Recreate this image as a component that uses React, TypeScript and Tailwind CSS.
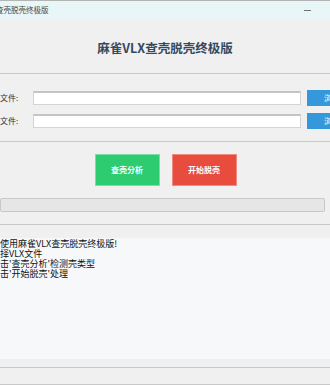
import React from 'react';

const cjk = { fontFamily: '"Noto Sans CJK SC", "Liberation Sans", sans-serif' };

const logLines = [
  "使用麻雀VLX查壳脱壳终极版!",
  "择VLX文件",
  "击'查壳分析'检测壳类型",
  "击'开始脱壳'处理",
];

const FileRow: React.FC<{ label: string }> = ({ label }) => (
  <div className="flex h-[16px] items-center">
    <span className="w-[33px] shrink-0 text-[8px] leading-none text-[#333]">{label}</span>
    <div className="h-[14px] w-[268px] shrink-0 border border-[#d4d4d4] border-t-[#c4c4c4] border-t-2 bg-white" />
    <button className="ml-[6px] flex h-[16px] w-[40px] shrink-0 items-center justify-start pl-[17px] text-[8px] text-white bg-[#3498db]">
      浏览
    </button>
  </div>
);

export default function App() {
  return (
    <div className="flex h-[385px] w-[330px] flex-col overflow-hidden bg-[#f0f0f0]" style={cjk}>
      {/* title bar */}
      <div className="flex h-[19px] shrink-0 items-center justify-between overflow-hidden border-t border-[#b4b4b4] bg-[#e8f6f8]">
        <span className="ml-[-4px] whitespace-nowrap text-[7.5px] leading-none text-[#444]">查壳脱壳终极版</span>
        <span className="mr-[19px] h-[1px] w-[7px] bg-[#707070]" />
      </div>

      {/* heading */}
      <div className="flex h-[55px] shrink-0 items-center justify-center border-b border-[#c8c8c8] pt-[4px]">
        <h1 className="text-[12.5px] font-bold text-[#34495e]">麻雀VLX查壳脱壳终极版</h1>
      </div>

      {/* file rows */}
      <div className="flex h-[68px] shrink-0 flex-col gap-[7px] overflow-hidden border-b border-[#c8c8c8] pt-[16px]">
        <FileRow label="文件:" />
        <FileRow label="文件:" />
      </div>

      {/* actions */}
      <div className="flex h-[83px] shrink-0 flex-col border-b border-[#c8c8c8] pt-[12px]">
        <div className="flex justify-center gap-[12px] pl-[1px]">
          <button className="h-[32px] w-[65px] border border-[#7fdca4] bg-[#2ecc71] text-[8px] font-bold text-white">
            查壳分析
          </button>
          <button className="h-[32px] w-[65px] border border-[#f08a80] bg-[#e74c3c] text-[8px] font-bold text-white">
            开始脱壳
          </button>
        </div>
        <div className="mt-[12px] h-[14px] w-[325px] rounded-[2px] border border-[#c8c8c8] bg-[#e6e6e6]" />
      </div>

      {/* log */}
      <div className="mt-[13px] h-[121px] shrink-0 bg-[#f7f8fa] pt-[1px]">
        {logLines.map((line, i) => (
          <div key={i} className="whitespace-nowrap text-[9px] leading-[10px] text-[#111]">
            {line}
          </div>
        ))}
      </div>

      <div className="h-[9px] shrink-0 border-b border-[#c8c8c8]" />
      <div className="flex-1 border-b border-[#c8c8c8]" />
    </div>
  );
}
